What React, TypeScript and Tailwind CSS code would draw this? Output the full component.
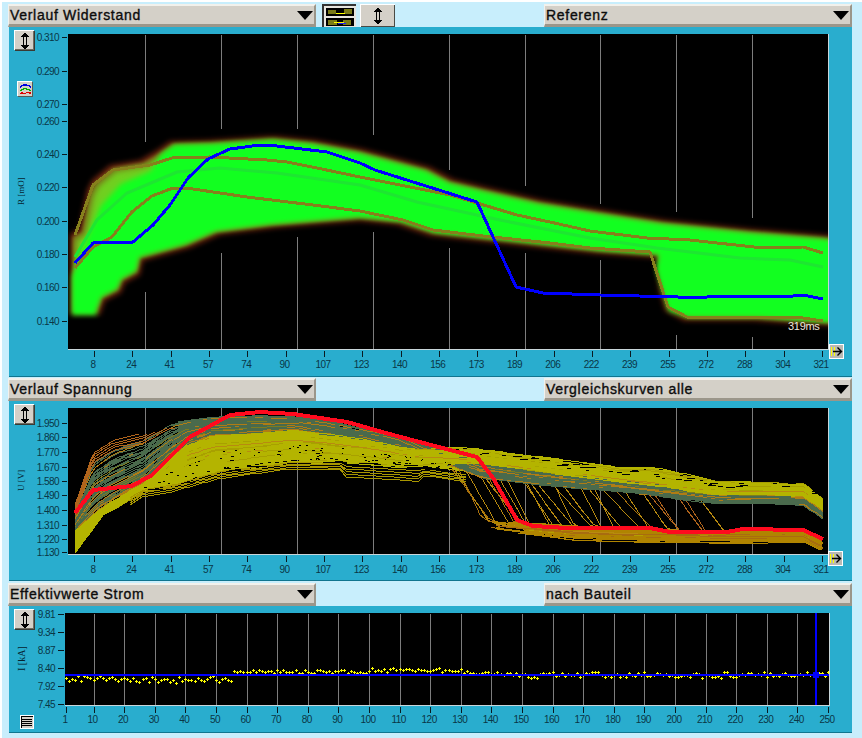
type Pt = [number, number];

// small seeded random so the curves come out the same every time
const makeRand = (seed: number) => () => {
	seed = (seed + 0x6d2b79f5) | 0;
	let t = Math.imul(seed ^ (seed >>> 15), 1 | seed);
	t = (t + Math.imul(t ^ (t >>> 7), 61 | t)) ^ t;
	return ((t ^ (t >>> 14)) >>> 0) / 4294967296;
};

const at = (pts: Pt[], x: number) => {
	if (x <= pts[0][0]) return pts[0][1];
	for (let i = 1; i < pts.length; i++) {
		if (x <= pts[i][0]) {
			const [x0, y0] = pts[i - 1];
			const [x1, y1] = pts[i];
			return y0 + ((y1 - y0) * (x - x0)) / (x1 - x0);
		}
	}
	return pts[pts.length - 1][1];
};

const toPoints = (pts: Pt[]) => pts.map((p) => p.join(",")).join(" ");
const lerp = (a: number, b: number, t: number) => a + (b - a) * t;

const GRID_X = [145, 221, 297, 373, 449, 525, 600, 676, 752];
const X_LABELS = [
	"8", "24", "41", "57", "74", "90", "107", "123", "140", "156",
	"173", "189", "206", "222", "239", "255", "272", "288", "304", "321",
];
const tickX = (i: number) => 94 + i * 38.32;

// ---------- Widerstand ----------
const bandTop: Pt[] = [
	[73, 237], [82, 232], [90, 193], [95, 183], [113, 168], [143, 163], [160, 153], [173, 144],
	[210, 143], [273, 139], [313, 143], [360, 152], [427, 170], [450, 182], [483, 190], [540, 203],
	[600, 213], [663, 223], [750, 232], [823, 238], [840, 240],
];
const bandBottom: Pt[] = [
	[840, 323], [829, 323], [757, 318], [687, 318], [668, 308], [662, 287], [658, 255], [600, 251],
	[433, 233], [400, 222], [360, 218], [273, 225], [217, 232], [187, 245], [140, 258], [137, 272],
	[122, 280], [118, 290], [102, 298], [97, 312], [73, 312],
];
// green starts further in on the left, that corner fades through olive in the reference
const coreTop: Pt[] = [[71, 275], [85, 240], [100, 205], [120, 183], [150, 170], ...bandTop.slice(6)];
const coreBottom: Pt[] = [...bandBottom.slice(0, 4), [668, 312], [655, 270], ...bandBottom.slice(6, 20), [100, 316], [71, 316]];
const bandPoly = toPoints([...bandTop, ...bandBottom]);
const corePoly = toPoints([...coreTop, ...coreBottom]);

const upperLine: Pt[] = [
	[75, 235], [93, 185], [113, 170], [150, 165], [172, 158], [210, 157], [267, 160], [287, 162],
	[317, 168], [360, 177], [450, 195], [477, 203], [517, 215], [550, 222], [590, 231], [647, 238],
	[690, 240], [763, 248], [803, 247], [823, 253],
];
const lowerLine: Pt[] = [
	[75, 268], [93, 247], [112, 237], [132, 212], [152, 196], [173, 188], [193, 189], [247, 197],
	[313, 205], [360, 211], [403, 220], [433, 230], [483, 236], [550, 243], [590, 248], [650, 252],
	[668, 307], [687, 317], [757, 317], [803, 318], [823, 321],
];
const midLine: Pt[] = [
	[75, 257], [97, 220], [127, 193], [177, 172], [220, 168], [277, 173], [360, 185], [417, 202],
	[500, 220], [590, 238], [657, 248], [740, 258], [790, 260], [823, 267],
];
const blueLine: Pt[] = [
	[75, 263], [93, 243], [133, 242], [153, 225], [170, 205], [188, 178], [208, 159], [230, 149],
	[260, 145], [277, 146], [327, 152], [360, 163], [375, 170], [477, 202], [516, 287], [543, 293],
	[600, 295], [678, 297], [697, 298], [717, 296], [793, 296], [803, 295], [823, 299],
];
const gridTopEnd = [142, 129, 129, 135, 170, 186, 204, 212, 218];
const gridBottomStart = [292, 253, 237, 232, 248, 253, 260, 335, 337];

// ---------- Spannung ----------
const U: Pt[] = [
	[75, 505], [93, 453], [113, 440], [143, 432], [170, 417], [210, 413], [260, 410], [293, 412],
	[360, 425], [427, 440], [450, 443], [483, 450], [543, 458], [617, 468], [650, 468], [717, 482],
	[803, 483], [823, 500],
];
const M: Pt[] = [
	[75, 532], [100, 510], [143, 485], [187, 445], [213, 435], [293, 430], [360, 440], [427, 453],
];
const L: Pt[] = [
	[75, 553], [103, 515], [143, 490], [173, 485], [220, 472], [293, 462], [343, 463], [410, 467],
	[450, 473], [530, 482], [617, 490], [717, 502], [803, 503], [823, 517],
];
const G: Pt[] = [
	[427, 456], [450, 458], [530, 470], [617, 480], [717, 493], [803, 495], [823, 508],
];
const lowTop: Pt[] = [[470, 515], [517, 522], [650, 528], [803, 530], [823, 540]];
const lowBottom: Pt[] = [[483, 528], [573, 540], [717, 543], [803, 542], [823, 552]];
const redLine: Pt[] = [
	[75, 513], [93, 490], [132, 486], [152, 475], [190, 437], [230, 415], [260, 412], [293, 414],
	[347, 422], [393, 435], [450, 450], [477, 457], [493, 478], [517, 520], [533, 526], [567, 528],
	[650, 528], [670, 532], [727, 532], [743, 529], [803, 530], [823, 539],
];

// filled bodies under the single lines, the dense parts of the bundle
const fillBetween = (top: (x: number) => number, bottom: (x: number) => number, from: number, to: number) => {
	const upper: Pt[] = [];
	const lower: Pt[] = [];
	for (let x = from; x <= to; x += 4) {
		upper.push([x, Math.round(top(x))]);
		lower.unshift([x, Math.round(bottom(x))]);
	}
	return toPoints([...upper, ...lower]);
};
const blendRight = (x: number, left: number, right: number) =>
	lerp(left, right, Math.min(1, Math.max(0, (x - 400) / 80)));
const grayFill = fillBetween(
	(x) => at(U, x) + 5,
	(x) => blendRight(x, at(M, x), at(G, x)),
	178,
	480,
);
const yellowFill = fillBetween(
	(x) => at(M, x),
	(x) => at(L, x) - 3,
	150,
	480,
);
const rightYellow = fillBetween((x) => at(U, x) + 1, (x) => at(G, x), 470, 823);
const rightGray = fillBetween((x) => at(G, x), (x) => at(L, x) - 1, 470, 823);
const lowFill = fillBetween((x) => at(lowTop, x) + 3, (x) => at(lowBottom, x) - 2, 530, 823);

type Curve = { color: string; pts: Pt[] };

const buildVoltage = () => {
	const rand = makeRand(41);
	const curves: Curve[] = [];
	const wobble = () => {
		const a = rand() * 6;
		const b = rand() * 6;
		const f = 0.008 + rand() * 0.02;
		return (x: number) => Math.sin(x * f + a) * 1.4 + Math.sin(x * f * 3 + b) * 0.7;
	};

	// cells that break down and drop to the lower band, they sit under the main band
	const drops = [
		452, 455, 459, 466, 478, 481, 486, 490, 497, 505, 521, 524, 527, 533, 548, 552, 560,
		578, 584, 592, 598, 610, 622, 640, 645, 652, 675, 682, 697,
	];
	for (const dx of drops) {
		const c = dx > 640 && dx < 690 ? "#b0641c" : rand() < 0.75 ? "#b88a10" : "#a8700c";
		const t = 0.1 + rand() * 0.8;
		const start = at(L, dx) - 4;
		const len = 22 + rand() * 26;
		const pts: Pt[] = [[dx, Math.round(start)]];
		const end = lerp(at(lowTop, dx + len), at(lowBottom, dx + len), t * 0.6);
		for (let x = dx + 3; x <= dx + len; x += 3) {
			pts.push([x, Math.round(lerp(start, end, (x - dx) / len))]);
		}
		const endX = Math.min(dx + 120, 823);
		for (let x = Math.round(dx + len) + 6; x <= endX; x += 6) {
			pts.push([x, Math.round(lerp(at(lowTop, x), at(lowBottom, x), t * 0.6))]);
		}
		curves.push({ color: c, pts });
	}

	const band = (gray: boolean, color: () => string, count: number, toX = 823) => {
		for (let i = 0; i < count; i++) {
			// gray lines thin out towards the top of the fan
			const tL = gray ? Math.sqrt(rand()) : rand();
			const tR = rand();
			const w = wobble();
			const c = color();
			const pts: Pt[] = [];
			for (let x = 75; x <= toX; x += 4) {
				const left = gray ? lerp(at(U, x), at(M, x), tL) : lerp(at(M, x), at(L, x), tL);
				const right = gray ? lerp(at(G, x), at(L, x), tR) : lerp(at(U, x), at(G, x), tR);
				const k = Math.min(1, Math.max(0, (x - 400) / 80));
				pts.push([x, Math.round(lerp(left, right, k) + w(x) * (x < 110 ? 0.4 : 1))]);
			}
			curves.push({ color: c, pts });
		}
	};
	band(true, () => {
		const r = rand();
		return r < 0.7 ? "#4a6a4c" : r < 0.92 ? "#b07c14" : "#7c7c20";
	}, 70);
	band(false, () => {
		const r = rand();
		return r < 0.86 ? "#b4b400" : r < 0.96 ? "#a8a000" : "#b88a10";
	}, 60);
	// denser fan at the start of the plot
	band(false, () => "#b4b400", 45, 190);

	// the lines that run above everything on the left
	for (let i = 0; i < 5; i++) {
		const off = i * 2.4;
		const pts: Pt[] = [];
		const stop = 140 + i * 9;
		for (let x = 75; x <= stop; x += 4) pts.push([x, Math.round(at(U, x) + off + (x - 75) * 0.02)]);
		curves.push({ color: "#b0641c", pts });
	}

	// single lines under the band
	for (let i = 0; i < 5; i++) {
		const pts: Pt[] = [];
		for (let x = 130; x <= 470; x += 6) {
			const sag = i * 1.6 + (x > 340 && x < 420 ? 3 + i : 0);
			pts.push([x, Math.round(at(L, x) + sag)]);
		}
		curves.push({ color: "#a89600", pts });
	}

	// lower band
	for (let i = 0; i < 30; i++) {
		const t = rand();
		const r = rand();
		const c = r < 0.72 ? "#b08400" : r < 0.9 ? "#a86c10" : "#b4a000";
		const w = wobble();
		const pts: Pt[] = [];
		for (let x = 490 + Math.round(rand() * 40); x <= 823; x += 4) {
			pts.push([x, Math.round(lerp(at(lowTop, x), at(lowBottom, x), t) + w(x) * 0.6)]);
		}
		curves.push({ color: c, pts });
	}

	return curves;
};

const voltageCurves = buildVoltage();

// black specks between the lines of the yellow band
const specks = (() => {
	const rand = makeRand(7);
	const out: { x: number; y: number; w: number }[] = [];
	for (let i = 0; i < 110; i++) {
		const x = 140 + rand() * 320;
		const t = 0.4 + rand() * 0.6;
		const y = lerp(at(M, x), at(L, x), t);
		out.push({ x: Math.round(x), y: Math.round(y), w: t > 0.9 ? 3 + Math.round(rand() * 14) : 1 + Math.round(rand() * 2) });
	}
	for (let i = 0; i < 45; i++) {
		const x = 480 + rand() * 340;
		const y = lerp(at(U, x), at(G, x), rand() * 0.5);
		out.push({ x: Math.round(x), y: Math.round(y), w: 2 + Math.round(rand() * 8) });
	}
	return out;
})();

// ---------- Strom ----------
const currentX = (n: number) => 66 + (n - 1) * 3.06;
const currentPoints = (() => {
	const rand = makeRand(99);
	const out: Pt[] = [];
	for (let n = 1; n <= 250; n++) {
		let y = 0;
		if (n <= 55) y = 680 + (rand() - 0.5) * 6 + (n > 30 && n < 38 ? 1.5 : 0);
		else if (n <= 100) y = 672.5 + (rand() - 0.5) * 3.5;
		else if (n <= 130) y = 671 + (rand() - 0.5) * 4;
		else if (n <= 150) y = 672.5 + ((n - 130) / 20) * 3 + (rand() - 0.5) * 3;
		else y = 676 + (rand() - 0.5) * 6;
		out.push([Math.round(currentX(n)), Math.round(y)]);
	}
	return out;
})();

const TICK_TEXT = "#0a3646";

const AxisY = ({ items, textX, tick }: { items: [string, number][]; textX: number; tick: [number, number] }) => (
	<g>
		{items.map(([label, y]) => (
			<g key={label}>
				<text x={textX} y={y + 3.5} textAnchor="end" fontSize="10" letterSpacing="-0.55" fill={TICK_TEXT}>
					{label}
				</text>
				<line x1={tick[0]} x2={tick[1]} y1={y + 0.5} y2={y + 0.5} stroke="#0a1a20" shapeRendering="crispEdges" />
			</g>
		))}
	</g>
);

const AxisX = ({ y }: { y: number }) => (
	<g>
		{X_LABELS.map((label, i) => (
			<g key={label}>
				<line
					x1={Math.round(tickX(i)) + 0.5}
					x2={Math.round(tickX(i)) + 0.5}
					y1={y}
					y2={y + 6}
					stroke="#0a1a20"
					shapeRendering="crispEdges"
				/>
				<text x={tickX(i) - 1} y={y + 17} textAnchor="middle" fontSize="10" letterSpacing="-0.55" fill={TICK_TEXT}>
					{label}
				</text>
			</g>
		))}
	</g>
);

const ScaleIcon = () => (
	<svg width="10" height="18" viewBox="0 0 10 18" fill="none" shapeRendering="crispEdges">
		<path d="M5 0L9 5H1Z M5 18L9 13H1Z" fill="#000" />
		<path d="M3.5 5V13 M6.5 5V13" stroke="#000" />
	</svg>
);

const ScaleButton = ({ className }: { className: string }) => (
	<button
		className={`absolute flex h-[20px] w-[20px] items-center justify-center border-t border-l border-white bg-[#d4d0c8] shadow-[inset_-1px_-1px_0_#6f6b60,1px_1px_0_#3a3a34] ${className}`}
	>
		<ScaleIcon />
	</button>
);

const ArrowButton = ({ className }: { className: string }) => (
	<div
		className={`absolute flex h-[15px] w-[15px] items-center justify-center border border-white bg-[#b9b9b4] ${className}`}
	>
		<svg width="13" height="11" viewBox="0 0 13 11" fill="none">
			<path d="M1.5 1V10 M4.5 1V10" stroke="#ffff00" />
			<path d="M3 5.5H11 M7.5 1.5L11.5 5.5L7.5 9.5" stroke="#000" strokeWidth="1.4" />
		</svg>
	</div>
);

const Dropdown = ({ text }: { text: string }) => (
	<div className="flex h-[23px] w-[308px] items-center justify-between border-t-2 border-l border-t-[#f2f1ec] border-l-[#f2f1ec] border-r-2 border-b-[3px] border-r-[#9b968a] border-b-[#9b968a] bg-[#d4d0c8] pr-[1px] pl-[1px]">
		<span className="font-['Liberation_Sans'] text-[14px] leading-none tracking-[0.7px] text-[#0c0c0c] [-webkit-text-stroke:0.35px_#0c0c0c]">
			{text}
		</span>
		<svg width="16" height="9" viewBox="0 0 16 9">
			<path d="M0 0H16L8 9Z" fill="#000" />
		</svg>
	</div>
);

const WaveformToggle = () => (
	<div className="ml-[6px] flex h-[23px] w-[34px] items-center justify-center border-t-2 border-l-2 border-t-[#333] border-l-[#333] bg-[#e6e4de]">
		<svg width="28" height="18" viewBox="0 0 28 18" shapeRendering="crispEdges">
			<rect width="28" height="18" fill="#000" />
			<rect x="2" y="2" width="8" height="4" fill="#7a7a18" />
			<rect x="18" y="1" width="8" height="5" fill="#7a7a18" />
			<rect x="2" y="12" width="9" height="5" fill="#7a7a18" />
			<rect x="17" y="12" width="8" height="5" fill="#7a7a18" />
			<rect x="10" y="5" width="9" height="1" fill="#ffff00" />
			<rect x="8" y="14" width="10" height="1" fill="#ffff00" />
			<rect x="12" y="15" width="8" height="1" fill="#2020ff" />
			<rect y="8" width="28" height="2" fill="#e6e4de" />
		</svg>
	</div>
);

const ScaleToggle = () => (
	<div className="ml-[4px] flex h-[23px] w-[35px] items-center justify-center border-t border-l border-white bg-[#d4d0c8] shadow-[inset_-1px_-1px_0_#4a4a44]">
		<ScaleIcon />
	</div>
);

const ResistancePanel = () => (
	<section className="relative ml-[1px] h-[350px] w-[843px] border-b border-[#10758f] bg-[#29adce]">
		<svg width="843" height="349" viewBox="9 27 843 349" className="block font-['Liberation_Sans']">
			<defs>
				<clipPath id="plot1">
					<rect x="68" y="34" width="760" height="315" />
				</clipPath>
				<filter id="halo" x="-5%" y="-10%" width="110%" height="120%" colorInterpolationFilters="sRGB">
					<feMorphology operator="dilate" radius="3" />
					<feGaussianBlur stdDeviation="2.6" />
				</filter>
				<filter id="rim" x="-5%" y="-10%" width="110%" height="120%" colorInterpolationFilters="sRGB">
					<feGaussianBlur stdDeviation="1.6" />
				</filter>
				<filter id="lime" x="-5%" y="-10%" width="110%" height="120%" colorInterpolationFilters="sRGB">
					<feMorphology operator="erode" radius="3" />
					<feGaussianBlur stdDeviation="3" />
				</filter>
				<filter id="core" x="-5%" y="-10%" width="110%" height="120%" colorInterpolationFilters="sRGB">
					<feMorphology operator="erode" radius="1" />
					<feGaussianBlur stdDeviation="2.6" />
				</filter>
			</defs>
			<rect x="68" y="34" width="760" height="315" fill="#000" />
			{GRID_X.map((x, i) => (
				<g key={x} stroke="#7d7d7d" shapeRendering="crispEdges">
					<line x1={x + 0.5} x2={x + 0.5} y1={35} y2={gridTopEnd[i]} />
					<line x1={x + 0.5} x2={x + 0.5} y1={gridBottomStart[i]} y2={349} />
				</g>
			))}
			<g clipPath="url(#plot1)">
				<polygon points={bandPoly} fill="#6a2410" filter="url(#halo)" />
				<polygon points={bandPoly} fill="#7a6a18" filter="url(#rim)" />
				<polygon points={bandPoly} fill="#70d020" filter="url(#lime)" />
				<polygon points={corePoly} fill="#12ff20" filter="url(#core)" />
				<polyline points={toPoints(midLine)} fill="none" stroke="#1ee632" strokeWidth="3" />
				<polyline points={toPoints(upperLine)} fill="none" stroke="#86801c" strokeWidth="3" shapeRendering="crispEdges" />
				<polyline points={toPoints(lowerLine)} fill="none" stroke="#86801c" strokeWidth="3" shapeRendering="crispEdges" />
				<polyline points={toPoints(blueLine)} fill="none" stroke="#0000ff" strokeWidth="3" shapeRendering="crispEdges" />
			</g>
			<text x="788" y="330" fontSize="11" letterSpacing="-0.3" fill="#efe8dc">
				319ms
			</text>
			<path d="M68 349.5H828.5V34" fill="none" stroke="#c9d6da" shapeRendering="crispEdges" />
			<AxisY
				textX={59}
				tick={[62, 67]}
				items={[
					["0.310", 37], ["0.290", 71], ["0.270", 104], ["0.260", 121], ["0.240", 154],
					["0.220", 187], ["0.200", 221], ["0.180", 254], ["0.160", 287], ["0.140", 321],
				]}
			/>
			<AxisX y={351} />
			<text
				transform="translate(24 205) rotate(-90)"
				fontSize="9"
				fill="#06232e"
				className="font-['Liberation_Serif']"
			>
				R [mO]
			</text>
		</svg>
		<ScaleButton className="top-[3px] left-[5px]" />
		<div className="absolute top-[54px] left-[8px] flex h-[15px] w-[15px] items-center justify-center border-t border-l border-white bg-[#d4d0c8] shadow-[1px_1px_0_#5a5a54]">
			<svg width="13" height="13" viewBox="0 0 13 13" fill="none" shapeRendering="crispEdges">
				<path d="M1 5C2 1 10 1 12 5" stroke="#0000e0" strokeWidth="1.3" />
				<path d="M1 8C3 5 9 5 12 8" stroke="#00b000" strokeWidth="1.3" />
				<path d="M1 11C3 8 5 12 7 10C9 8 10 11 12 10" stroke="#e00000" strokeWidth="1.3" />
			</svg>
		</div>
		<ArrowButton className="top-[317px] left-[820px]" />
	</section>
);

const VoltagePanel = () => (
	<section className="relative ml-[1px] h-[180px] w-[843px] border-b border-[#10758f] bg-[#29adce]">
		<svg width="843" height="179" viewBox="9 401 843 179" className="block font-['Liberation_Sans']">
			<defs>
				<clipPath id="plot2">
					<rect x="68" y="408" width="760" height="146" />
				</clipPath>
			</defs>
			<rect x="68" y="408" width="760" height="146" fill="#000" />
			{GRID_X.map((x) => (
				<line key={x} x1={x + 0.5} x2={x + 0.5} y1={408} y2={554} stroke="#7d7d7d" shapeRendering="crispEdges" />
			))}
			<g clipPath="url(#plot2)">
				<polygon points={grayFill} fill="#4a6a4c" shapeRendering="crispEdges" />
				<polygon points={yellowFill} fill="#b4b400" shapeRendering="crispEdges" />
				<polygon points={rightYellow} fill="#a8a800" shapeRendering="crispEdges" />
				<polygon points={rightGray} fill="#4a6a4c" shapeRendering="crispEdges" />
				<polygon points={lowFill} fill="#b08400" shapeRendering="crispEdges" />
				{voltageCurves.map((c, i) => (
					<polyline key={i} points={toPoints(c.pts)} fill="none" stroke={c.color} shapeRendering="crispEdges" />
				))}
				{specks.map((s, i) => (
					<rect key={i} x={s.x} y={s.y} width={s.w} height="1" fill="#000" />
				))}
				<polyline points={toPoints(redLine)} fill="none" stroke="#ff0a1e" strokeWidth="4" shapeRendering="crispEdges" />
			</g>
			<path d="M68 554.5H828.5V408" fill="none" stroke="#c9d6da" shapeRendering="crispEdges" />
			<AxisY
				textX={59}
				tick={[62, 67]}
				items={[
					["1.950", 423], ["1.860", 437], ["1.770", 452], ["1.670", 467], ["1.580", 481],
					["1.490", 495], ["1.400", 510], ["1.310", 525], ["1.220", 539], ["1.130", 552],
				]}
			/>
			<AxisX y={556} />
			<text
				transform="translate(24 491) rotate(-90)"
				fontSize="9"
				fill="#06232e"
				className="font-['Liberation_Serif']"
			>
				U [V]
			</text>
		</svg>
		<ScaleButton className="top-[3px] left-[5px]" />
		<ArrowButton className="top-[150px] left-[819px]" />
	</section>
);

const CURRENT_TICKS = [1, 10, 20, 30, 40, 50, 60, 70, 80, 90, 100, 110, 120, 130, 140, 150, 160, 170, 180, 190, 200, 210, 220, 230, 240, 250];

const CurrentPanel = () => (
	<section className="relative ml-[1px] h-[127px] w-[843px] border-b border-[#10758f] bg-[#29adce]">
		<svg width="843" height="126" viewBox="9 607 843 126" className="block font-['Liberation_Sans']">
			<rect x="65" y="614" width="764" height="92" fill="#000" />
			{CURRENT_TICKS.slice(1, -1).map((n) => (
				<line
					key={n}
					x1={Math.round(currentX(n)) + 0.5}
					x2={Math.round(currentX(n)) + 0.5}
					y1={615}
					y2={706}
					stroke="#7d7d7d"
					shapeRendering="crispEdges"
				/>
			))}
			<g shapeRendering="crispEdges" fill="#ffff00">
				{currentPoints.map(([x, y], i) => (
					<path key={i} d={`M${x - 1} ${y}h3v1h-3z M${x} ${y - 1}h1v3h-1z`} />
				))}
			</g>
			<g shapeRendering="crispEdges" fill="#0000ff">
				<rect x="65" y="675" width="764" height="2" />
				<rect x="815" y="614" width="2" height="92" />
				<rect x="813" y="673" width="6" height="6" />
			</g>
			<path d="M65 706.5H829.5V614" fill="none" stroke="#c9d6da" shapeRendering="crispEdges" />
			<AxisY
				textX={55}
				tick={[58, 64]}
				items={[
					["9.81", 615], ["9.34", 633], ["8.87", 651], ["8.40", 669], ["7.92", 687], ["7.45", 705],
				]}
			/>
			{CURRENT_TICKS.map((n) => (
				<g key={n}>
					<line
						x1={Math.round(currentX(n)) + 0.5}
						x2={Math.round(currentX(n)) + 0.5}
						y1={708}
						y2={714}
						stroke="#0a1a20"
						shapeRendering="crispEdges"
					/>
					<text x={currentX(n) - 1} y={724} textAnchor="middle" fontSize="10" letterSpacing="-0.55" fill={TICK_TEXT}>
						{n}
					</text>
				</g>
			))}
			<text
				transform="translate(25 672) rotate(-90)"
				fontSize="10"
				fill="#06232e"
				className="font-['Liberation_Serif']"
			>
				I [kA]
			</text>
		</svg>
		<ScaleButton className="top-[3px] left-[5px]" />
		<div className="absolute top-[109px] left-[11px] flex h-[14px] w-[14px] flex-col justify-center gap-px border border-white bg-[#d4d0c8] px-[1px] shadow-[inset_1px_1px_0_#000]">
			<div className="h-px bg-black" />
			<div className="h-px bg-black" />
			<div className="h-px bg-black" />
			<div className="h-px bg-black" />
		</div>
	</section>
);

const App = () => {
	return (
		<main className="h-[738px] w-[862px] overflow-hidden border-t-2 border-l-2 border-white bg-[#c8eefc] pt-[2px] pl-[6px]">
			<div className="flex w-[844px]">
				<Dropdown text="Verlauf Widerstand" />
				<WaveformToggle />
				<ScaleToggle />
				<div className="ml-auto">
					<Dropdown text="Referenz" />
				</div>
			</div>
			<ResistancePanel />
			<div className="mt-[1px] flex w-[844px] justify-between">
				<Dropdown text="Verlauf Spannung" />
				<Dropdown text="Vergleichskurven alle" />
			</div>
			<VoltagePanel />
			<div className="mt-[2px] flex w-[844px] justify-between">
				<Dropdown text="Effektivwerte Strom" />
				<Dropdown text="nach Bauteil" />
			</div>
			<CurrentPanel />
		</main>
	);
};

export default App;
